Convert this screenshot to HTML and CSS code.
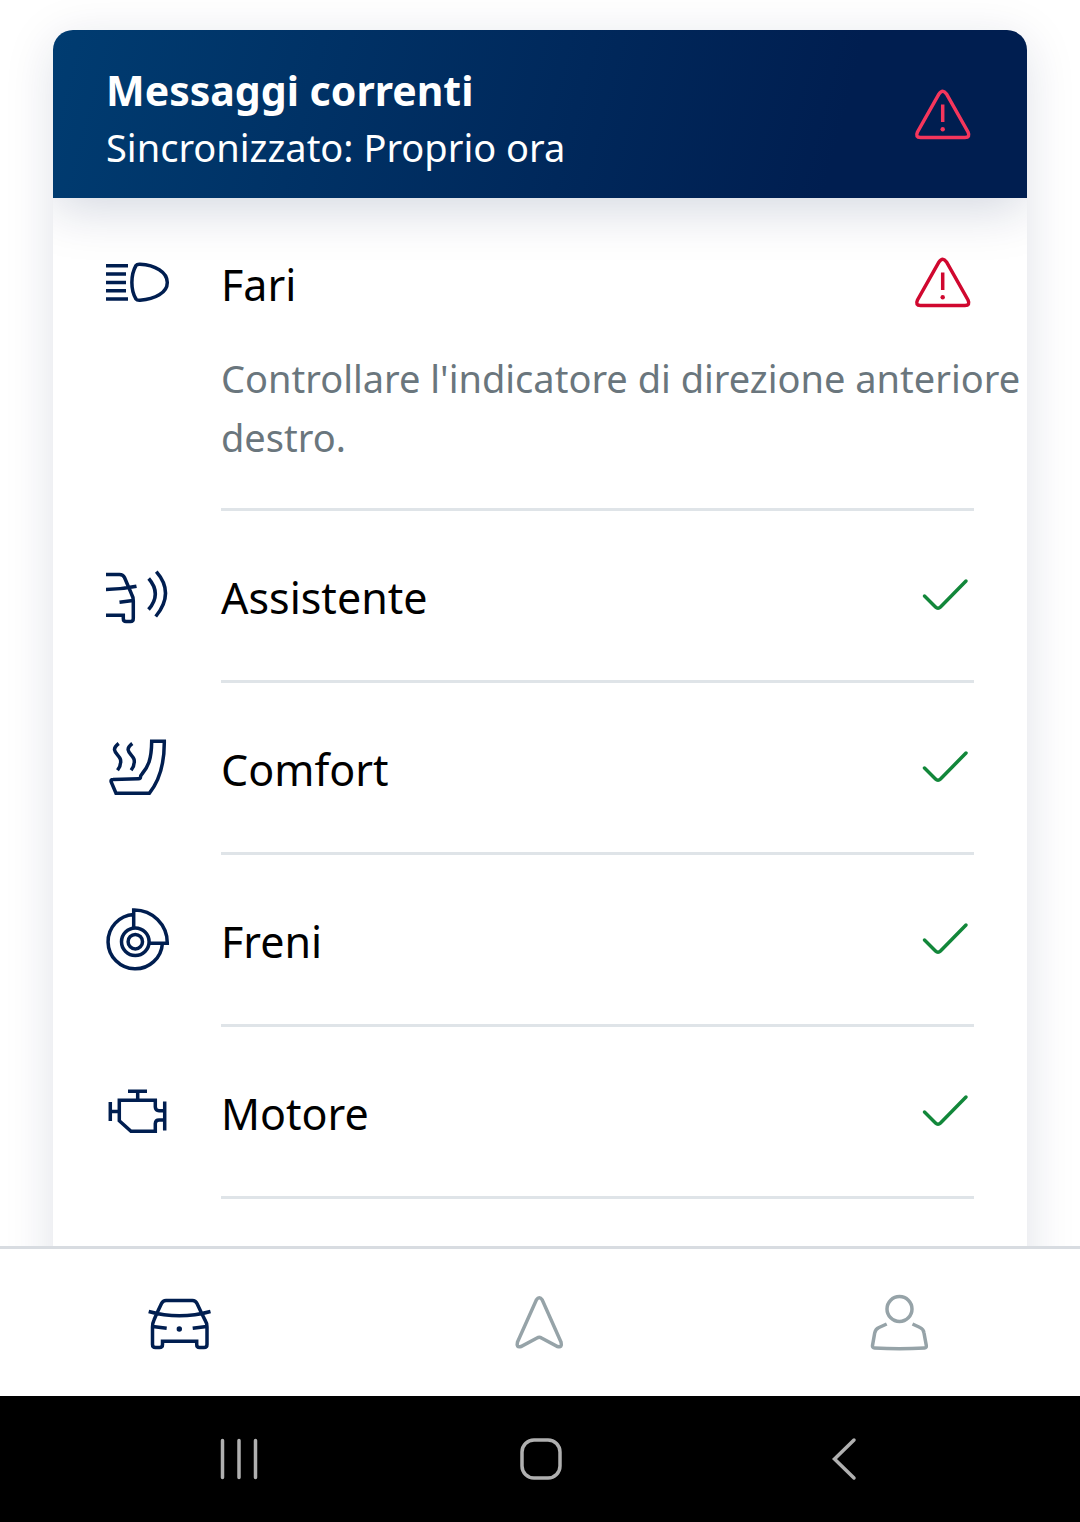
FILE: index.html
```html
<!DOCTYPE html>
<html lang="it">

<head>
    <meta charset="UTF-8">
    <meta name="viewport" content="width=device-width, initial-scale=1.0">
    <title>Messaggi correnti</title>
    <link rel="stylesheet" href="styles.css">
</head>

<body>
    <!-- Shared status icons -->
    <svg class="sprite" aria-hidden="true">
        <symbol id="warning" viewBox="0 0 65 65">
            <path d="M30 12 Q33.700 6.500 37.500 12 L59 50 Q61.500 55.500 56 55.500 H11.500 Q6 55.500 8.500 50 Z M33.700 22.500 V40" />
            <circle class="dot" cx="33.700" cy="47.300" r="2.200" />
        </symbol>
        <symbol id="check" viewBox="0 0 65 65">
            <path d="M15.500 33 L26.500 44 Q29 46.500 31.500 44 L57 18" />
        </symbol>
    </svg>

    <main class="content">
        <section class="card">
            <header class="card-header">
                <div>
                    <h1>Messaggi correnti</h1>
                    <p>Sincronizzato: Proprio ora</p>
                </div>
                <svg class="icon alert-light" role="img" aria-label="Avviso"><use href="#warning" /></svg>
            </header>

            <ul class="list">
                <li class="item">
                    <svg class="icon" viewBox="0 0 65 65" aria-hidden="true">
                        <path d="M1 15.700 H23 M1 24 H21 M1 32.400 H21 M1 40.700 H21 M1 49 H23" />
                        <path d="M31 15.500 Q32 14 35 14.200 C50 15 62.300 22 62.300 32.500 C62.300 43 50 49 35 50.300 Q32 50.500 31 49 C25.500 40 25.500 25 31 15.500 Z" />
                    </svg>
                    <div class="item-body">
                        <div class="item-head">
                            <h2>Fari</h2>
                            <svg class="icon alert" role="img" aria-label="Avviso"><use href="#warning" /></svg>
                        </div>
                        <p class="detail">Controllare l'indicatore di direzione anteriore destro.</p>
                    </div>
                </li>
                <li class="item">
                    <svg class="icon" viewBox="0 0 65 65" aria-hidden="true">
                        <path d="M1 11.500 H14.500 Q18 11.500 19.500 14.500 L26.500 31 Q28.300 34 28.300 38 V55.500 Q28.300 58.500 25.500 58.500 H21 Q18.300 58.500 18.300 55.500 V52.300 H1 M1 26.500 Q16 26.500 31.500 23.300 M14.500 39.300 L28 37.500" />
                        <path d="M43.700 15.500 Q57 31 43.500 46.500 M51.300 8.700 Q70 30 50.700 53.500" />
                    </svg>
                    <div class="item-body">
                        <div class="item-head">
                            <h2>Assistente</h2>
                            <svg class="icon ok" role="img" aria-label="OK"><use href="#check" /></svg>
                        </div>
                    </div>
                </li>
                <li class="item">
                    <svg class="icon" viewBox="0 0 65 65" aria-hidden="true">
                        <path d="M46.700 6.300 H59.300 C59.500 28 55 45 44.300 58.300 H11 L6.200 47 Q5.500 44.500 8 44.500 L33.500 43.700 Q35.500 43.700 35.500 42 Q35.500 40.500 37 39 C43 32 46.500 25 46.700 6.300 Z" />
                        <path d="M13.700 8.500 C4 16 14 19 15.500 24.500 Q16.500 30 12.500 35.300 M27.300 8.500 C17.600 16 27.600 19 29.100 24.500 Q30.100 30 26.100 35.300" />
                    </svg>
                    <div class="item-body">
                        <div class="item-head">
                            <h2>Comfort</h2>
                            <svg class="icon ok" role="img" aria-label="OK"><use href="#check" /></svg>
                        </div>
                    </div>
                </li>
                <li class="item">
                    <svg class="icon" viewBox="0 0 65 65" aria-hidden="true">
                        <circle cx="30.300" cy="34.700" r="7.200" />
                        <circle cx="30.300" cy="34.700" r="13.800" />
                        <path d="M28.700 7.500 A27.200 27.200 0 1 0 57.400 36.300 M28.700 21 V3 A33 33 0 0 1 62.300 36.300 H44" />
                    </svg>
                    <div class="item-body">
                        <div class="item-head">
                            <h2>Freni</h2>
                            <svg class="icon ok" role="img" aria-label="OK"><use href="#check" /></svg>
                        </div>
                    </div>
                </li>
                <li class="item">
                    <svg class="icon" viewBox="0 0 65 65" aria-hidden="true">
                        <path d="M59.700 31.700 H54 Q50.500 31.700 50.300 28 V21.300 H14.300 V41.700 L26 52.300 H50.300 V44.500 Q50.500 41 54 41 H59.700" />
                        <path d="M23 12.300 H42 M32.700 12.300 V21 M59.700 22.500 V51.500 M5.300 23 V42 M5.300 32.500 H14.300" />
                    </svg>
                    <div class="item-body">
                        <div class="item-head">
                            <h2>Motore</h2>
                            <svg class="icon ok" role="img" aria-label="OK"><use href="#check" /></svg>
                        </div>
                    </div>
                </li>
            </ul>
        </section>
    </main>

    <!-- App tabs -->
    <nav class="tabs">
        <a href="#car" class="tab active" aria-label="Veicolo">
            <svg viewBox="0 0 66 66" aria-hidden="true">
                <path d="M10 24 L14.500 14.500 Q16 11.500 19 11.500 H45.500 Q48.500 11.500 50 14.500 L54.500 24 L58 31 Q60 34 60 38 V55.500 Q60 58.500 57 58.500 H52.500 Q49.700 58.500 49.700 55.500 V52.300 H15.500 V55.500 Q15.500 58.500 12.500 58.500 H8.500 Q5.500 58.500 5.500 55.500 V38 Q5.500 34 7 31 L10 24 M1.700 22.500 Q32.300 31 63.500 22.500 M5.700 37.500 L19.700 39.300 M45.700 39.300 L59.700 37.500" />
                <circle class="dot" cx="32.300" cy="40" r="2.700" />
            </svg>
        </a>
        <a href="#navigation" class="tab" aria-label="Navigazione">
            <svg viewBox="0 0 66 66" aria-hidden="true">
                <path d="M29.300 11 Q32.300 6.500 35.300 11 L54 53 Q55.500 59 50.500 57.500 L34.500 49 Q32.300 47.500 30 49 L14 57.500 Q9 59 10.500 53 Z" />
            </svg>
        </a>
        <a href="#profile" class="tab" aria-label="Profilo">
            <svg viewBox="0 0 66 66" aria-hidden="true">
                <circle cx="32.500" cy="20" r="12.500" />
                <path d="M19.700 35 L12 38.500 Q8.500 40 7.700 44 L5.500 56.500 Q5.200 58.800 7.500 58.900 Q32.300 60.500 57.500 58.900 Q59.700 58.800 59.300 56.500 L57 44 Q56.500 40 53 38.500 L45.500 35" />
            </svg>
        </a>
    </nav>

    <!-- Android navigation -->
    <footer class="system-bar">
        <button type="button" aria-label="App recenti">
            <svg viewBox="0 0 50 50" aria-hidden="true"><path d="M8.500 6.500 V43.500 M25 6.500 V43.500 M41.500 6.500 V43.500" /></svg>
        </button>
        <button type="button" aria-label="Home">
            <svg viewBox="0 0 50 50" aria-hidden="true"><rect x="7" y="6" width="38" height="38" rx="12" /></svg>
        </button>
        <button type="button" aria-label="Indietro">
            <svg viewBox="0 0 50 50" aria-hidden="true"><path d="M38 6 L18.500 25 L38 44" /></svg>
        </button>
    </footer>
</body>

</html>
```
FILE: styles.css
```css
* {
    box-sizing: border-box;
}

body {
    display: flex;
    flex-direction: column;
    height: 100vh;
    margin: 0;
    background: #fff;
    color: #000;
    font-family: "Noto Sans", sans-serif;
}

h1,
h2,
p {
    margin: 0;
}

svg {
    display: block;
    fill: none;
    stroke: currentColor;
    stroke-width: 3.5px;
}

.sprite {
    display: none;
}

.dot {
    fill: currentColor;
    stroke: none;
}

.content {
    flex: 1;
    min-height: 0;
    padding: 30px 53px 0;
    overflow: hidden;
}

.card {
    padding-bottom: 100px;
    overflow: hidden;
    background: #fff;
    border-radius: 20px;
    box-shadow: 0 10px 50px rgba(0, 30, 80, 0.13);
}

.card-header {
    display: flex;
    align-items: center;
    justify-content: space-between;
    padding: 27px 53px;
    color: #fff;
    background: linear-gradient(105deg, #003c71 0%, #001e50 80%);
    box-shadow: 0 10px 50px rgba(0, 30, 80, 0.18);
}

.card-header h1 {
    font-size: 41px;
    font-weight: 700;
    line-height: 66px;
}

.card-header p {
    font-size: 38px;
    line-height: 48px;
}

/* Message list */
.list {
    margin: 0;
    padding: 0 53px 0 52px;
    list-style: none;
}

.item {
    display: flex;
    gap: 51px;
}

.icon {
    flex: none;
    width: 65px;
    height: 65px;
    color: #001e50;
}

.item > .icon {
    margin-top: 52px;
}

.item-body {
    flex: 1;
    border-bottom: 3px solid #dfe4e8;
}

.item-head {
    display: flex;
    align-items: center;
    justify-content: space-between;
    padding: 50px 0;
}

.item-head h2 {
    padding-top: 4px;
    font-size: 43px;
    font-weight: 400;
    line-height: 65px;
}

.detail {
    margin: -18px -53px 0 0;
    padding-bottom: 41px;
    color: #6a767d;
    font-size: 38px;
    line-height: 59px;
}

.alert {
    color: #d0082f;
}

.alert-light {
    color: #f5365c;
}

.ok {
    color: #12873a;
    stroke-linecap: round;
}

/* App tabs */
.tabs {
    display: flex;
    background: #fff;
    border-top: 3px solid #d8dce1;
}

.tab {
    flex: 1;
    display: flex;
    justify-content: center;
    padding: 40px 0 41px;
    color: #96a3a8;
}

.tab.active {
    color: #001e50;
}

.tab svg {
    width: 66px;
    height: 66px;
}

/* Android navigation */
.system-bar {
    display: flex;
    padding: 0 88px;
    background: #000;
}

.system-bar button {
    flex: 1;
    display: flex;
    justify-content: center;
    padding: 38px 0;
    border: 0;
    background: none;
    color: #b0b0b0;
}

.system-bar svg {
    width: 50px;
    height: 50px;
    stroke-linecap: round;
}
```
